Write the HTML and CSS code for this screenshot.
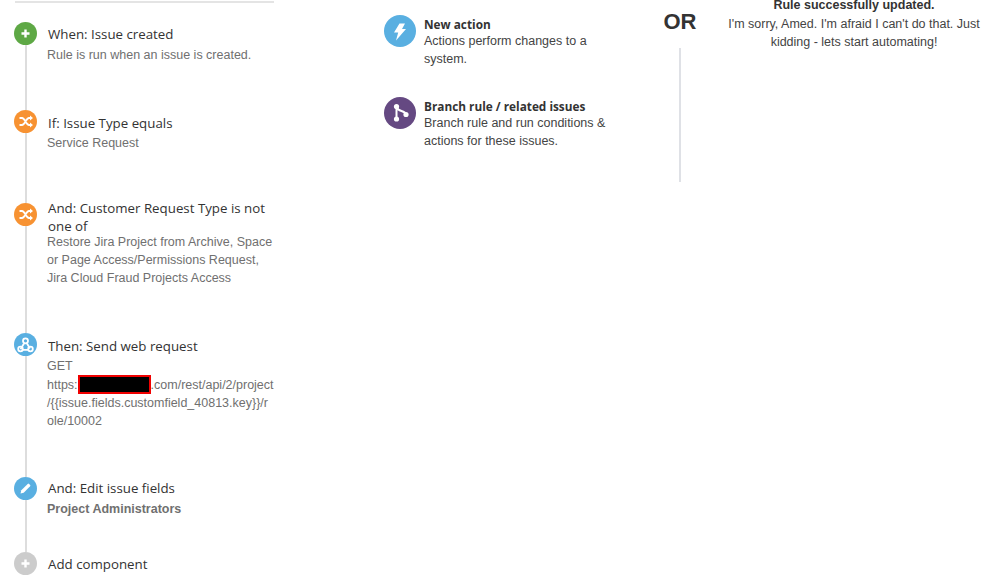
FILE: index.html

```html
<!DOCTYPE html>
<html lang="en">
<head>
  <meta charset="UTF-8">
  <title>Automation rule</title>
  <link rel="stylesheet" href="styles.css">
</head>
<body>
  <div class="page">

    <div class="rule-col">
      <div class="rule-top"></div>

      <div class="step step-1">
        <div class="rail">
          <span class="icon green"><svg viewBox="0 0 23 23"><path d="M11.5 7.5v8M7.5 11.5h8" class="line thick"/></svg></span>
          <span class="rail-line"></span>
        </div>
        <div class="step-text">
          <div class="step-title">When: Issue created</div>
          <div class="step-desc first">Rule is run when an issue is created.</div>
        </div>
      </div>

      <div class="step step-2">
        <div class="rail">
          <span class="icon orange"><svg viewBox="0 0 23 23"><path d="M5.5 8H8c3 0 4 7 7 7h1.5M5.5 15H8c3 0 4-7 7-7h1.5" class="line mid"/><path d="M16 5.5L19 8l-3 2.5zM16 12.5l3 2.5-3 2.5z" fill="#fff"/></svg></span>
          <span class="rail-line"></span>
        </div>
        <div class="step-text">
          <div class="step-title">If: Issue Type equals</div>
          <div class="step-desc">Service Request</div>
        </div>
      </div>

      <div class="step step-3">
        <div class="rail">
          <span class="icon orange"><svg viewBox="0 0 23 23"><path d="M5.5 8H8c3 0 4 7 7 7h1.5M5.5 15H8c3 0 4-7 7-7h1.5" class="line mid"/><path d="M16 5.5L19 8l-3 2.5zM16 12.5l3 2.5-3 2.5z" fill="#fff"/></svg></span>
          <span class="rail-line"></span>
        </div>
        <div class="step-text">
          <div class="step-title">And: Customer Request Type is not one of</div>
          <div class="step-desc tight">Restore Jira Project from Archive, Space or Page Access/Permissions Request, Jira Cloud Fraud Projects Access</div>
        </div>
      </div>

      <div class="step step-4">
        <div class="rail">
          <span class="icon blue"><svg viewBox="0 0 23 23"><path d="M10 10.5l-3.5 5.8M13 10.5l3 5M8.5 16.8h6" class="line mid"/><circle cx="11.5" cy="7.8" r="2.5" class="line mid"/><circle cx="6.5" cy="16" r="2.3" class="line mid"/><circle cx="16.5" cy="16" r="2.3" class="line mid"/></svg></span>
          <span class="rail-line"></span>
        </div>
        <div class="step-text">
          <div class="step-title">Then: Send web request</div>
          <div class="step-desc">GET<br>https:<span class="redacted"></span>.com/rest/api/2/project<br>/{{issue.fields.customfield_40813.key}}/r<br>ole/10002</div>
        </div>
      </div>

      <div class="step step-5">
        <div class="rail">
          <span class="icon blue"><svg viewBox="0 0 23 23"><path d="M6.5 16.5l.8-3.2 6.4-6.4a1 1 0 0 1 1.400 0l1 1a1 1 0 0 1 0 1.400l-6.400 6.400z" fill="#fff"/></svg></span>
          <span class="rail-line"></span>
        </div>
        <div class="step-text">
          <div class="step-title">And: Edit issue fields</div>
          <div class="step-desc bold">Project Administrators</div>
        </div>
      </div>

      <div class="step step-6">
        <div class="rail">
          <span class="icon grey"><svg viewBox="0 0 23 23"><path d="M11.5 7.5v8M7.5 11.5h8" class="line thick"/></svg></span>
        </div>
        <div class="step-text">
          <div class="step-title">Add component</div>
        </div>
      </div>
    </div>

    <div class="action-col">
      <div class="action">
        <span class="icon big blue"><svg viewBox="0 0 32 32"><path d="M15.5 8.5h5.500l-3 5.500h4L12 25.500l2.200-8H10z" fill="#fff"/></svg></span>
        <div>
          <div class="action-title">New action</div>
          <div class="action-desc">Actions perform changes to a system.</div>
        </div>
      </div>
      <div class="action">
        <span class="icon big purple"><svg viewBox="0 0 32 32"><path d="M12.5 10v12M13 10.5c1 4.500 8 2.500 9 7" class="line wide"/><circle cx="12.5" cy="9.5" r="2.6" fill="#fff"/><circle cx="12.5" cy="22" r="2.6" fill="#fff"/><circle cx="22" cy="17.5" r="2.6" fill="#fff"/></svg></span>
        <div>
          <div class="action-title">Branch rule / related issues</div>
          <div class="action-desc">Branch rule and run conditions &amp; actions for these issues.</div>
        </div>
      </div>
    </div>

    <div class="or-col">
      <div class="or-label">OR</div>
      <div class="or-line"></div>
    </div>

    <div class="done-col">
      <div class="done-title">Rule successfully updated.</div>
      <div class="done-desc">I'm sorry, Amed. I'm afraid I can't do that. Just kidding - lets start automating!</div>
    </div>

  </div>
</body>
</html>
```

FILE: styles.css

```css
html, body {
  margin: 0;
  height: 100%;
  background: #fff;
  overflow: hidden;
}
body {
  font-family: "Liberation Sans", Arial, sans-serif;
  font-size: 12.5px;
  line-height: 18px;
  color: #333;
}
.page {
  display: flex;
  align-items: flex-start;
}

/* left column */
.rule-col {
  width: 259px;
  margin-left: 15px;
  flex-shrink: 0;
}
.rule-top {
  height: 2px;
  margin-top: 1px;
  background: #e4e4e4;
}
.step {
  display: flex;
  margin-left: -1px;
}
.rail {
  width: 24px;
  flex-shrink: 0;
  display: flex;
  flex-direction: column;
  align-items: center;
}
.rail .icon {
  align-self: flex-start;
}
.rail-line {
  flex: 1;
  width: 2px;
  background: #ddd;
}
.step-text {
  margin-left: 10px;
  width: 232px;
}
.step-1 { margin-top: 19px; }
.step-1 .step-text { padding: 3px 0 46px; }
.step-2 .step-text { padding: 4px 0 51px; }
.step-3 .step-text { margin-top: -4px; padding: 0 0 46px; }
.step-4 .step-text { padding: 4px 0 47px; }
.step-5 .step-text { padding: 2px 0 34px; }
.step-6 .step-text { padding: 3px 0 0; }

.step-title {
  width: 228px;
  font-family: "Open Sans", sans-serif;
  font-size: 13.3px;
  line-height: 18px;
  color: #333;
}
.step-desc {
  margin: 2px 0 0 -1px;
  color: #707070;
}
.step-3 .step-desc {
  width: 228px;
}
.step-desc.first { margin-top: 3px; }
.step-desc.tight { margin-top: -2px; }
.step-desc.bold { margin-top: 3px; font-weight: bold; }
.redacted {
  display: inline-block;
  box-sizing: border-box;
  width: 73px;
  height: 19px;
  vertical-align: -5px;
  background: #000;
  border: 2px solid #f00000;
}

/* icons */
.icon {
  display: block;
  width: 23px;
  height: 23px;
  border-radius: 50%;
  flex-shrink: 0;
}
.icon svg {
  display: block;
  width: 100%;
  height: 100%;
}
.icon.big {
  width: 32px;
  height: 32px;
}
.line {
  fill: none;
  stroke: #fff;
  stroke-width: 1.5;
}
.line.mid { stroke-width: 1.8; }
.line.thick { stroke-width: 2.4; }
.line.wide { stroke-width: 2; }
.green { background: #5ea845; }
.orange { background: #f79232; }
.blue { background: #59afe1; }
.purple { background: #654982; }
.grey { background: #ccc; }

/* middle column */
.action-col {
  width: 240px;
  margin: 15px 0 0 110px;
  flex-shrink: 0;
}
.action {
  display: flex;
  gap: 8px;
  margin-bottom: 29px;
}
.action-title {
  font-family: "Open Sans", sans-serif;
  font-size: 11.8px;
  font-weight: bold;
  line-height: 18px;
  color: #333;
}
.action-desc {
  width: 190px;
  margin-top: -1px;
  color: #444;
}

/* or column */
.or-col {
  width: 32px;
  margin: 9px 0 0 40px;
  flex-shrink: 0;
  display: flex;
  flex-direction: column;
  align-items: center;
}
.or-label {
  font-size: 22px;
  font-weight: bold;
  line-height: 26px;
  color: #333;
}
.or-line {
  width: 2px;
  height: 134px;
  margin-top: 13px;
  background: #dfe1e6;
}

/* right column */
.done-col {
  width: 260px;
  margin: -4px 0 0 28px;
  text-align: center;
  color: #444;
}
.done-title {
  font-weight: bold;
  color: #333;
}
.done-desc {
  margin-top: 1px;
}
```
